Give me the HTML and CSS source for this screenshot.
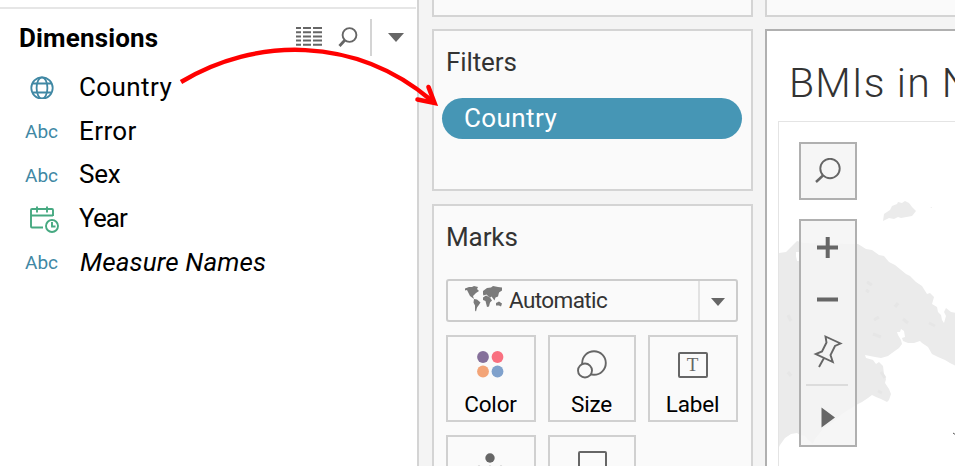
FILE: index.html
```html
<!DOCTYPE html>
<html lang="en">
<head>
<meta charset="utf-8">
<title>Worksheet</title>
<link rel="stylesheet" href="styles.css">
</head>
<body>
<div class="app">
  <aside class="data">
    <header class="data-head">
      <h2><span class="t dim">Dimensions</span></h2>
      <svg class="i-list" width="26" height="20" viewBox="0 0 26 20"><path d="M0 1h5M7 1h8M17 1h9M0 5.200h5M7 5.200h8M17 5.200h9M0 9.400h5M7 9.400h8M17 9.400h9M0 13.600h5M7 13.600h8M17 13.600h9M0 17.800h5M7 17.800h8M17 17.800h9" stroke="#666" stroke-width="2"/></svg>
      <svg class="i-find" width="20" height="20" viewBox="0 0 20 20" fill="none" stroke="#666"><circle cx="11.500" cy="8" r="6.900" stroke-width="1.900"/><path d="M7 13l-5.500 6" stroke-width="2.800"/></svg>
      <i class="sep"></i>
      <svg class="i-caret" width="16" height="9"><path d="M0 0h16L8 9z" fill="#666"/></svg>
    </header>
    <ul class="fields">
      <li><svg width="33" height="24" viewBox="0 0 33 24" fill="none" stroke="#4088a4" stroke-width="1.800"><circle cx="16" cy="13" r="10.700"/><ellipse cx="16" cy="13" rx="5.400" ry="10.700"/><path d="M6.500 8.500h19M6.500 17.500h19"/></svg><span class="t country">Country</span></li>
      <li><b>Abc</b><span class="t error">Error</span></li>
      <li><b>Abc</b><span class="t sex">Sex</span></li>
      <li><svg width="35" height="30" viewBox="0 0 35 30" fill="none" stroke="#46a981" stroke-width="1.900"><path d="M18 24.500H7Q6 24.500 6 23.500V7Q6 6 7 6h20q1 0 1 1v6M6 12.500h22M12 3.500v6M22 3.500v6"/><circle cx="27" cy="23" r="6"/><path d="M27 19v4.500h3.500"/></svg><span class="t year">Year</span></li>
      <li><b>Abc</b><span class="t names">Measure Names</span></li>
    </ul>
  </aside>

  <main class="shelves">
    <section class="card stub"></section>
    <section class="card filters">
      <h3><span class="t">Filters</span></h3>
      <div class="pill"><span class="t country">Country</span></div>
    </section>
    <section class="card marks">
      <h3><span class="t">Marks</span></h3>
      <div class="select">
        <svg width="38" height="26" viewBox="0 0 38 26" fill="#7a7a7a"><path d="M0 2.500l4-1.500 3 0 2-1 4 1-1 2 2 2-3 2-3 3 1 3-4-3-2-4-1-2-2 .500zM9 13l3 .500 3.500 3-2 3-1.500 2-1 4-1-1 0-5-1.500-3zM18 8l0-3 4-3 4-.500 2-1.500 5 1 4 .500 0 3-3 2-1 4-2.500 1-1 3-3-4-1 1-2-1-2-2-3 1zM18 11.500l3-2 4 2 2 3-2 2-1 4-2 .500-1.500-6-2.500-1zM31 17l3-1.500 3 2-1 3-2-1-3 0z"/></svg>
        <span class="t">Automatic</span>
        <div class="drop"><svg width="14" height="8"><path d="M0 0h14l-7 8z" fill="#666"/></svg></div>
      </div>
      <div class="grid">
        <div class="mark"><svg width="28" height="28"><circle cx="7" cy="7" r="5.900" fill="#85709a"/><circle cx="21.500" cy="7" r="5.900" fill="#f97080"/><circle cx="7" cy="21.500" r="5.900" fill="#f3a477"/><circle cx="21.500" cy="21.500" r="5.900" fill="#7fa1cc"/></svg><span class="t color">Color</span></div>
        <div class="mark"><svg class="i-size" width="32" height="30" fill="none" stroke="#666" stroke-width="1.900"><circle cx="18" cy="13" r="11.800"/><circle cx="9" cy="20.500" r="7" fill="#fafafa"/></svg><span class="t size">Size</span></div>
        <div class="mark"><span class="label-icon">T</span><span class="t label">Label</span></div>
        <div class="mark"><svg width="32" height="28" fill="#666"><circle cx="16" cy="8" r="4.700"/><circle cx="5" cy="20.500" r="4.700"/><circle cx="16" cy="20.500" r="4.700"/><circle cx="27" cy="20.500" r="4.700"/></svg></div>
        <div class="mark"><svg class="i-size" width="32" height="28" fill="none" stroke="#666" stroke-width="2"><rect x="3" y="2" width="27" height="24" rx="1"/></svg></div>
      </div>
    </section>
  </main>

  <section class="view">
    <div class="card stub"></div>
    <div class="sheet">
      <h1><span class="t">BMIs in N</span></h1>
      <div class="map">
        <svg class="land" width="177" height="344" viewBox="778 121 177 344" fill="#ebebeb"><path d="M882 220L883 213 889 209 891 205 896 203 897 201 901 202 904 200 908 202 911 206 915 210 911 215 900 217 897 216 893 218 888 217zM929 206l2 0 0 1z"/><path d="M778 252L785 251 792 244 796 240 803 242 857 243 865 248 871 249 878 254 883 255 888 261 894 264 905 273 909 275 915 281 921 285 926 293 929 292 933 296 931 303 936 306 937 311 940 314 941 319 943 322 945 315 943 311 945 307 950 311 955 312V365L949 362 944 359 937 356 931 353 927 346 921 342 919 340 913 342 907 342 902 340 901 337 904 336 903 330 900 328 899 331 896 331 897 334 900 339 901 343 898 347 891 352 887 355 880 357 874 356 869 355 864 354 865 357 872 359 875 363 878 361 882 365 883 373 885 378 884 382 888 388 890 393 888 399 886 401 880 398 875 396 871 394 867 397 861 401 857 403 841 413 832 421 822 428 814 438 812 443 807 439 804 435 799 434 796 432 790 433 784 437 779 444 778 446z"/><path d="M795 251h3v9h-2l-1-5z" fill="#fff"/><path d="M805 300l4 6M822 360l-3 4M866 281l5 3M873 319l5-3M872 333l8 3M894 306l3-4M928 322l6 3M787 314l3 6M877 390l4 2M787 371l3 4M880 371l4 6M865 289l3 2M902 318l5 4" stroke="#e6e6e6" stroke-width="3"/></svg>
        <svg class="speck" width="4" height="5"><path d="M0 1l3 2h1" stroke="#555" fill="none"/></svg>
        <div class="tools">
          <div class="tool search"><svg width="27" height="27" fill="none" stroke="#666"><circle cx="15" cy="10.500" r="9.700" stroke-width="1.900"/><path d="M8 17.500l-7 6.500" stroke-width="2.400"/></svg></div>
          <div class="tool bar">
            <svg width="54" height="224" viewBox="801 221 54 224" fill="#666"><path d="M825.700 237h4v21h-4zM817 245.500h21v4h-21zM817 297.500h21v4h-21zM821.500 407.500v20l13.500-10z"/><path d="M806 384h42v2h-42z" fill="#dcdcdc"/><path d="M825.500 336.500l15 7-5.500 2.500-4.500 9 2.300 7-17-8 6.200-2.500 4.500-9zM824 358l-5 9" fill="none" stroke="#666" stroke-width="1.900"/></svg>
          </div>
        </div>
      </div>
    </div>
  </section>
</div>
<svg class="arrow" width="955" height="466" fill="none" stroke="#f00"><path d="M181 82C255 37 355 36 431 100" stroke-width="4.500"/><path d="M428.500 87l6 16-17-3.500" stroke-width="4.600" stroke-linecap="round"/></svg>
</body>
</html>
```
FILE: styles.css
```css
* { box-sizing: border-box; }
body { margin: 0; width: 955px; height: 466px; overflow: hidden; font-family: Roboto, "Liberation Sans", sans-serif; color: #000; background: #f4f4f4; }
h1, h2, h3, ul { margin: 0; padding: 0; font-weight: 400; }
svg { display: block; flex: none; }
.t { display: inline-block; white-space: nowrap; }
.app { display: flex; height: 466px; }

.data { width: 419px; flex: none; background: #fff; border-right: 2px solid #d4d4d4; padding-top: 7px; }
.data-head { display: flex; align-items: center; width: 416px; height: 58px; border-top: 2px solid #e6e6e6; padding-left: 19px; }
.data-head h2 { width: 277px; font-size: 26px; font-weight: 700; line-height: 32px; padding-top: 2px; }
.dim { letter-spacing: 0.15px; }
.i-find { margin-left: 16px; }
.sep { width: 2px; height: 37px; background: #d4d4d4; margin-left: 12px; }
.i-caret { margin-left: 16px; }
.fields { list-style: none; }
.fields li { display: flex; align-items: center; height: 43.75px; padding-left: 25px; font-size: 26px; }
.fields li > :first-child { width: 35px; margin-right: 19px; }
.fields b { font-size: 19px; font-weight: 400; color: #4088a4; padding-top: 2px; }
.country { letter-spacing: 0.4px; }
.error { letter-spacing: 0.4px; }
.sex { letter-spacing: -0.2px; }
.year { letter-spacing: -0.9px; }
.names { font-style: italic; letter-spacing: 0.15px; padding-left: 1px; }

.shelves { width: 321px; flex: none; margin-left: 13px; display: flex; flex-direction: column; gap: 12px; }
.card { background: #fafafa; border: 2px solid #d4d4d4; }
.stub { height: 17px; flex: none; border-top: 0; }
.filters { height: 162px; flex: none; }
.shelves h3 { font-size: 26px; line-height: 32px; color: #333; padding: 15px 0 0 12px; letter-spacing: -0.1px; }
.pill { margin: 20px 9px 0 8px; height: 41px; border-radius: 21px; background: #4696b5; color: #fff; font-size: 26px; line-height: 40px; padding-left: 22px; letter-spacing: 0; }
.marks { flex: 1; min-height: 0; overflow: hidden; margin-top: 1px; border-bottom: 0; }
.select { display: flex; align-items: center; margin: 26px 13px 0 12px; height: 43px; border: 2px solid #ccc; border-radius: 3px; padding-left: 17px; font-size: 22.5px; letter-spacing: -0.6px; color: #333; }
.select svg { margin-top: -3px; }
.select .t { margin-left: 6px; margin-top: -2px; }
.drop { margin-left: auto; width: 38px; height: 39px; border-left: 2px solid #e2e2e2; display: flex; align-items: center; justify-content: center; }
.drop svg { margin-top: 2px; }
.grid { display: grid; grid-template-columns: 90px 88px 90px; justify-content: space-between; row-gap: 13px; margin: 13px 13px 0 12px; height: 131px; overflow: hidden; align-content: start; }
.mark { height: 87px; border: 2px solid #d0d0d0; display: flex; flex-direction: column; align-items: center; padding-top: 13px; font-size: 22.5px; letter-spacing: -0.2px; }
.mark svg { height: 30px; margin-right: 2px; }
.mark .i-size { margin-right: 0; }
.mark .t { line-height: 28px; margin-top: 10px; margin-right: 1px; }
.label-icon { width: 30px; height: 26px; margin: 2px 1px 2px 0; border: 2px solid #666; border-radius: 2px; color: #666; font: 19px/22px "Liberation Serif", serif; text-align: center; }

.view { margin-left: 12px; flex: 1; min-width: 0; display: flex; flex-direction: column; gap: 12px; }
.view .stub { border-right: 0; }
.sheet { flex: 1; min-height: 0; background: #fff; border: 2px solid #b0b0b0; border-width: 2px 0 0 2px; padding: 25px 0 0 11px; overflow: hidden; }
.sheet h1 { height: 65px; padding-left: 11px; font: 300 41px/54px Roboto, sans-serif; letter-spacing: 1.1px; color: #333; white-space: nowrap; overflow: hidden; }
.map { position: relative; height: 345px; border: 1px solid #e4e4e4; border-width: 1px 0 0 1px; }
.land { position: absolute; left: 0; top: 0; }
.speck { position: absolute; left: 174px; top: 310px; }
.tools { position: relative; display: flex; flex-direction: column; gap: 19px; padding: 20px 0 0 20px; }
.tool { width: 58px; border: 2px solid #b0b0b0; background: rgba(245, 245, 245, .85); }
.search { height: 58px; display: flex; align-items: center; justify-content: center; }
.bar { height: 228px; }
.arrow { position: absolute; left: 0; top: 0; }
```
